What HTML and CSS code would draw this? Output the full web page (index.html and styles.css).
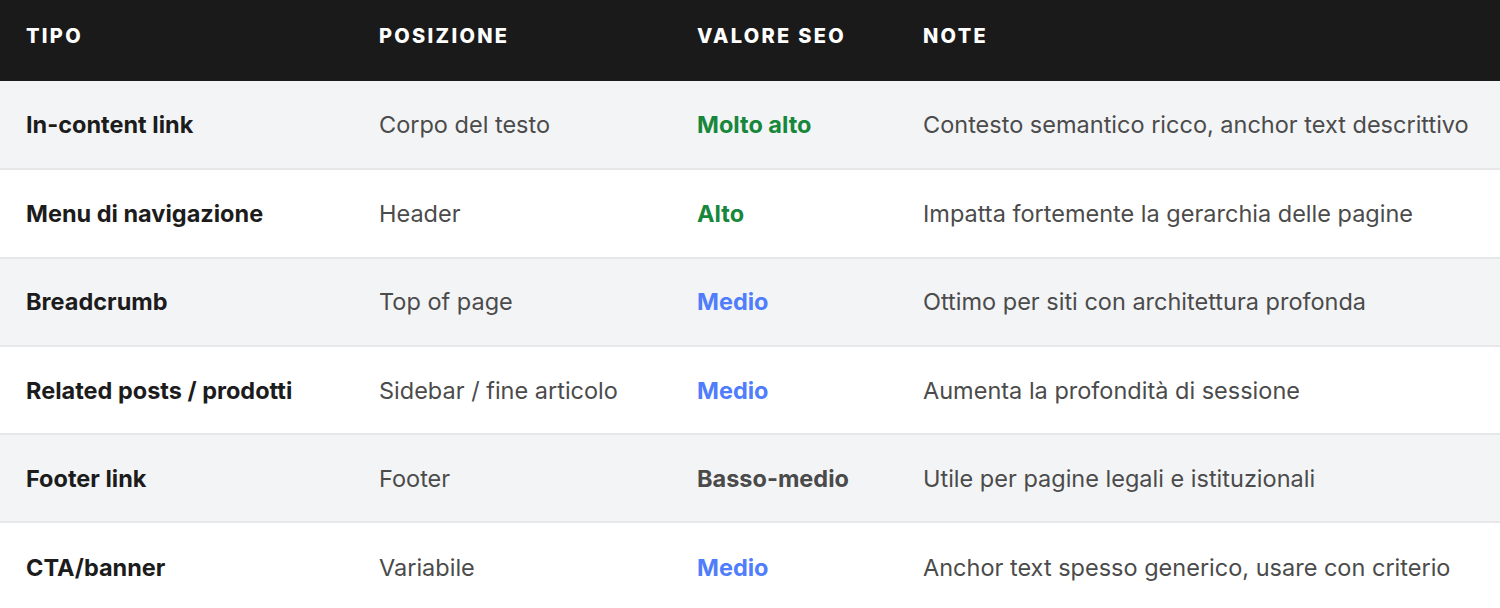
FILE: index.html
```
<!DOCTYPE html>
<html lang="it">
<head>
<meta charset="utf-8">
<title>Tipi di link interni</title>
<link rel="stylesheet" href="styles.css">
</head>
<body>
<table class="links">
  <colgroup>
    <col class="c1"><col class="c2"><col class="c3"><col class="c4">
  </colgroup>
  <thead>
    <tr><th>Tipo</th><th>Posizione</th><th>Valore SEO</th><th>Note</th></tr>
  </thead>
  <tbody>
    <tr><td class="type">In-content link</td><td class="pos">Corpo del testo</td><td class="val high">Molto alto</td><td class="note">Contesto semantico ricco, anchor text descrittivo</td></tr>
    <tr><td class="type">Menu di navigazione</td><td class="pos">Header</td><td class="val high">Alto</td><td class="note">Impatta fortemente la gerarchia delle pagine</td></tr>
    <tr><td class="type">Breadcrumb</td><td class="pos">Top of page</td><td class="val mid">Medio</td><td class="note">Ottimo per siti con architettura profonda</td></tr>
    <tr><td class="type">Related posts / prodotti</td><td class="pos">Sidebar / fine articolo</td><td class="val mid">Medio</td><td class="note">Aumenta la profondità di sessione</td></tr>
    <tr><td class="type">Footer link</td><td class="pos">Footer</td><td class="val low">Basso-medio</td><td class="note">Utile per pagine legali e istituzionali</td></tr>
    <tr><td class="type">CTA/banner</td><td class="pos">Variabile</td><td class="val mid">Medio</td><td class="note">Anchor text spesso generico, usare con criterio</td></tr>
  </tbody>
</table>
</body>
</html>
```
FILE: styles.css
```
html, body {
  margin: 0;
  padding: 0;
  background: #ffffff;
}
body {
  font-family: Inter, "Noto Sans", "Liberation Sans", sans-serif;
  color: #4a4a4a;
}
.links {
  width: 1500px;
  border-collapse: collapse;
  table-layout: fixed;
}
.c1 { width: 353px; }
.c2 { width: 318px; }
.c3 { width: 226px; }
.c4 { width: 603px; }

.links th {
  background: #1a1a1a;
  color: #ffffff;
  text-align: left;
  text-transform: uppercase;
  font-size: 20px;
  font-weight: 800;
  letter-spacing: 2.3px;
  height: 81px;
  padding: 0 0 10px 26px;
  box-sizing: border-box;
  vertical-align: middle;
}
.links td {
  height: 88.3px;
  padding: 0 0 0 26px;
  box-sizing: border-box;
  font-size: 23.5px;
  vertical-align: middle;
  border-bottom: 2px solid #e6e7e9;
  white-space: nowrap;
}
.links tbody tr:nth-child(odd) td { background: #f3f4f6; }
.links tbody tr:nth-child(even) td { background: #ffffff; }
.links tbody tr:last-child td { border-bottom: 0; }

.type { font-weight: 700; color: #1c1c1c; }
.pos, .note { font-weight: 400; color: #4b4b4b; }
.val { font-weight: 700; }
.high { color: #17873b; }
.mid { color: #4f7dfc; }
.low { color: #4a4a4a; }
```
